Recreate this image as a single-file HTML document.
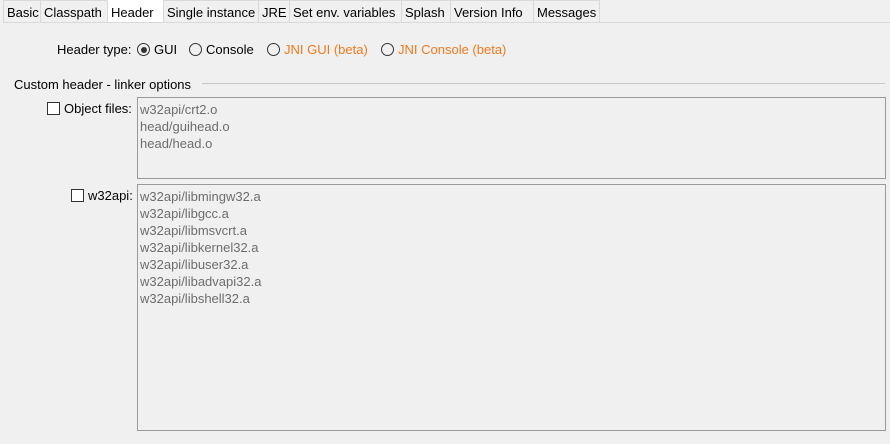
<!DOCTYPE html><html><head><style>
body{margin:0;width:890px;height:444px;background:#f0f0f0;font-family:"Liberation Sans",sans-serif;font-size:13px;color:#000;position:relative;overflow:hidden}
.a{position:absolute;white-space:nowrap}
.tabs{position:absolute;left:3px;top:0;height:22px;display:flex;border-bottom:1px solid #d9d9d9;width:887px;background:#f0f0f0}
.t{height:22px;line-height:23px;border:1px solid #d9d9d9;border-bottom:none;margin-right:-1px;padding:0 3px;background:#f0f0f0;box-sizing:border-box;overflow:hidden;white-space:nowrap}
.t.s{background:#fff;border-color:#fff #d9d9d9}
.r{position:absolute;top:43px;width:13px;height:13px;border:1px solid #333;border-radius:50%;box-sizing:border-box}
.r.c::after{content:"";position:absolute;left:2.5px;top:2.5px;width:6px;height:6px;border-radius:50%;background:#333}
.cb{position:absolute;width:13px;height:13px;border:1px solid #333;background:#fff;box-sizing:border-box}
.box{position:absolute;left:137px;width:749px;border:1px solid #999;box-sizing:border-box;color:#6d6d6d;padding:3px 0 0 2px;line-height:17px}
.o{color:#f07a1e}
</style></head><body>
<div class="tabs">
<div class="t" style="width:38px">Basic</div><div class="t" style="width:68px">Classpath</div><div class="t s" style="width:57px">Header</div><div class="t" style="width:96px">Single instance</div><div class="t" style="width:32px">JRE</div><div class="t" style="width:113px">Set env. variables</div><div class="t" style="width:50px">Splash</div><div class="t" style="width:84px">Version Info</div><div class="t" style="width:67px">Messages</div>
</div>
<div class="a" style="left:57px;top:42px">Header type:</div>
<div class="r c" style="left:137px"></div><div class="a" style="left:154px;top:42px">GUI</div>
<div class="r" style="left:189px"></div><div class="a" style="left:206px;top:42px">Console</div>
<div class="r" style="left:267px"></div><div class="a o" style="left:284px;top:42px">JNI GUI (beta)</div>
<div class="r" style="left:381px"></div><div class="a o" style="left:398px;top:42px">JNI Console (beta)</div>
<div class="a" style="left:14px;top:77px">Custom header - linker options</div>
<div class="a" style="left:202px;top:83px;width:683px;height:1px;background:#c8c8c8"></div>
<div class="cb" style="left:47px;top:102px"></div><div class="a" style="left:64px;top:101px">Object files:</div>
<div class="box" style="top:97px;height:82px">w32api/crt2.o<br>head/guihead.o<br>head/head.o</div>
<div class="cb" style="left:71px;top:189px"></div><div class="a" style="left:88px;top:188px">w32api:</div>
<div class="box" style="top:184px;height:247px">w32api/libmingw32.a<br>w32api/libgcc.a<br>w32api/libmsvcrt.a<br>w32api/libkernel32.a<br>w32api/libuser32.a<br>w32api/libadvapi32.a<br>w32api/libshell32.a</div>
</body></html>
